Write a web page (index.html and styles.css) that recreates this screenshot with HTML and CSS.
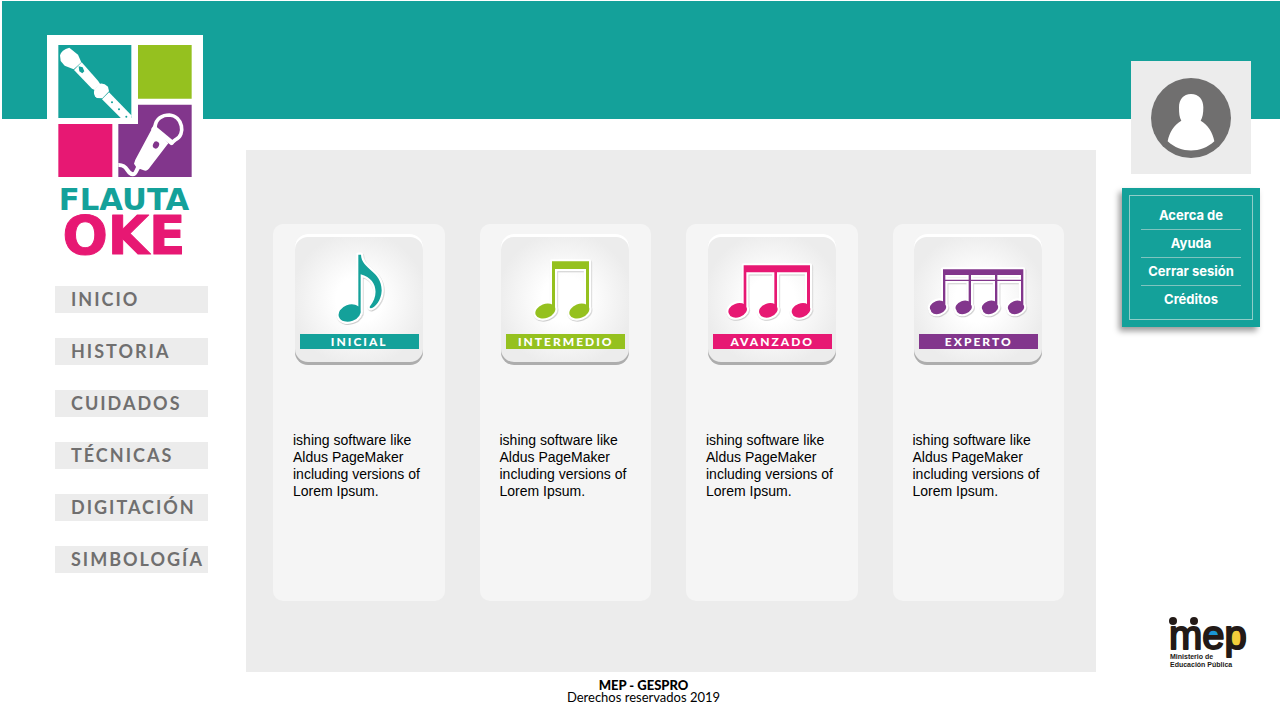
FILE: index.html
```html
<!DOCTYPE html>
<html lang="es">
<head>
<meta charset="utf-8">
<meta name="viewport" content="width=device-width, initial-scale=1">
<title>Flauta Oke</title>
<link rel="stylesheet" href="styles.css">
</head>
<body>
<div class="page">
  <header class="sidebar">
    <a class="brand" href="#" aria-label="Flauta Oke">
      <svg class="brand-art" viewBox="21 15 468 681">
        <path fill="#14a19a" d="M55 45h219v219H55z"/>
        <path fill="#95c11f" d="M294 45h161v161H294z"/>
        <path fill="#e71873" d="M55 282h162v159H55z"/>
        <path fill="#82368c" d="M294 224h161v217H235V282h59z"/>
        <g fill="#fff">
          <path d="M60 76Q64 60 88 53L114 74 124 97 101 118 74 107 62 93z"/>
          <path d="M125 97 174 152 180 161 164 180 156 176 102 120z"/>
          <path d="M177 162Q190 157 204 170L207 184 187 205 170 204Q158 194 163 180z"/>
          <path d="M207 187 274 256V265H243L186 208z"/>
          <path d="M339 290 385 340 331 410Q321 426 311 421L290 413 282 401 286 389z"/>
          <path d="M342 284 401 333Q405 338 399 344L393 346 333 298z"/>
        </g>
        <path fill="#14a19a" d="M116 109 128 112 133 124 127 130 118 124z"/>
        <g fill="#14a19a"><circle cx="216" cy="217" r="3"/><circle cx="237" cy="238" r="3"/><circle cx="259" cy="260" r="3"/></g>
        <g fill="none" stroke="#fff" stroke-linecap="round">
          <path stroke-width="11" d="M345 293C346 265 369 255 388 255C428 258 438 314 407 329L398 336"/>
          <path stroke-width="12" stroke-linecap="butt" d="M235 405C265 404 260 432 278 433C292 432 288 411 301 408"/>
        </g>
        <ellipse cx="348" cy="345" rx="9" ry="11" fill="#82368c" transform="rotate(25 348 345)"/>
        <text class="brand-flauta" x="252" y="540">FLAUTA</text>
        <text class="brand-oke" x="252" y="673">OKE</text>
      </svg>
    </a>
    <nav class="nav" aria-label="Principal">
      <a href="#">INICIO</a>
      <a href="#">HISTORIA</a>
      <a href="#">CUIDADOS</a>
      <a href="#">TÉCNICAS</a>
      <a href="#">DIGITACIÓN</a>
      <a href="#">SIMBOLOGÍA</a>
    </nav>
  </header>

  <main class="levels">
    <article class="card teal">
      <button class="tile" type="button">
        <svg class="note" viewBox="77 42 384 300"><path d="M267 104H275C276 148 338 152 337 212C336 240 318 262 305 265Q299 264 302 259C330 225 324 176 274 163V280H267ZM209 291A34 25 -20 1 1 273 267A34 25 -20 1 1 209 291Z"/></svg>
        <span class="ribbon">INICIAL</span>
      </button>
      <p>ishing software like Aldus PageMaker including versions of Lorem Ipsum.</p>
    </article>
    <article class="card green">
      <button class="tile" type="button">
        <svg class="note" viewBox="81 42 384 300"><path d="M234 124H345V272H336V147H243V272H234ZM185 284A31 21 -20 1 1 243 262A31 21 -20 1 1 185 284ZM287 284A31 21 -20 1 1 345 262A31 21 -20 1 1 287 284Z"/></svg>
        <span class="ribbon">INTERMEDIO</span>
      </button>
      <p>ishing software like Aldus PageMaker including versions of Lorem Ipsum.</p>
    </article>
    <article class="card pink">
      <button class="tile" type="button">
        <svg class="note" viewBox="86 42 384 300"><path d="M193 136H392V268H383V157H293V268H285V157H201V268H193ZM149 281A28 19 -20 1 1 201 261A28 19 -20 1 1 149 281ZM241 281A28 19 -20 1 1 293 261A28 19 -20 1 1 241 281ZM339 281A28 19 -20 1 1 391 261A28 19 -20 1 1 339 281Z"/></svg>
        <span class="ribbon">AVANZADO</span>
      </button>
      <p>ishing software like Aldus PageMaker including versions of Lorem Ipsum.</p>
    </article>
    <article class="card purple">
      <button class="tile" type="button">
        <svg class="note" viewBox="76 42 384 300"><path d="M163 148H404V260H397V165H326V260H319V165H247V260H240V165H170V260H163ZM166 179H400V183H166ZM126 270A24 16 -20 1 1 170 254A24 16 -20 1 1 126 270ZM203 270A24 16 -20 1 1 247 254A24 16 -20 1 1 203 270ZM282 270A24 16 -20 1 1 326 254A24 16 -20 1 1 282 270ZM360 270A24 16 -20 1 1 404 254A24 16 -20 1 1 360 270Z"/></svg>
        <span class="ribbon">EXPERTO</span>
      </button>
      <p>ishing software like Aldus PageMaker including versions of Lorem Ipsum.</p>
    </article>
  </main>

  <aside class="account">
    <div class="avatar">
      <svg viewBox="121 82 240 240" role="img" aria-label="Usuario">
        <circle cx="241" cy="202" r="120" fill="#706f6f"/>
        <path fill="#fff" d="M241 130C265 130 278 147 278 170C278 188 276 200 270 210C292 222 306 245 311 272C271 309 211 309 171 272C176 245 190 222 212 210C206 200 205 188 205 170C205 147 218 130 241 130Z"/>
      </svg>
    </div>
    <nav class="menu" aria-label="Cuenta">
      <ul>
        <li><a href="#">Acerca de</a></li>
        <li><a href="#">Ayuda</a></li>
        <li><a href="#">Cerrar sesión</a></li>
        <li><a href="#">Créditos</a></li>
      </ul>
    </nav>
    <svg class="mep" viewBox="0 0 84 54">
      <circle cx="5" cy="5" r="4" fill="#231a17"/>
      <circle cx="26" cy="5" r="4" fill="#231a17"/>
      <path fill="#1a96d4" d="M38 22a7 8 0 0 1 14 0z"/>
      <ellipse cx="70" cy="22" rx="8" ry="10" fill="#f3ce3b"/>
      <text class="mep-word" x="1" y="33">mep</text>
      <text class="mep-small" x="2" y="43">Ministerio de</text>
      <text class="mep-small" x="2" y="51">Educación Pública</text>
    </svg>
  </aside>

  <footer class="footer">
    <strong>MEP - GESPRO</strong>
    <span>Derechos reservados 2019</span>
  </footer>
</div>
</body>
</html>
```
FILE: styles.css
```css
* { box-sizing: border-box; }

body {
  margin: 0;
  background: #fff;
  font-family: Lato, sans-serif;
}

a { color: inherit; text-decoration: none; }

.page {
  display: grid;
  grid-template-columns: 246px 1fr 185px;
  grid-template-rows: 1fr auto;
  min-height: 100vh;
  background: linear-gradient(#14a19a, #14a19a) 2px 1px / calc(100% - 3px) 118px no-repeat;
}

/* Left column */
.sidebar { padding: 35px 38px 0 47px; }

.brand {
  display: block;
  width: 156px;
  background: #fff;
}

.brand-art { display: block; width: 100%; overflow: visible; }

.brand-flauta,
.brand-oke {
  font-family: "DejaVu Sans", sans-serif;
  font-weight: 700;
  text-anchor: middle;
  stroke-linejoin: round;
}

.brand-flauta { font-size: 92px; fill: #14a19a; }
.brand-oke { font-size: 160px; fill: #e71873; stroke: #e71873; stroke-width: 3px; }

.nav {
  display: grid;
  gap: 25px;
  margin: 24px 0 0 8px;
}

.nav a {
  padding-left: 16px;
  background: #ececec;
  color: #706f6f;
  font-size: 18px;
  font-weight: 700;
  line-height: 27px;
  letter-spacing: 2px;
  white-space: nowrap;
}

/* Level cards */
.levels {
  display: grid;
  grid-template-columns: repeat(4, 1fr);
  gap: 35px;
  margin-top: 150px;
  padding: 74px 32px 71px 27px;
  background: #ececec;
}

.card {
  display: flex;
  flex-direction: column;
  align-items: center;
  padding: 10px 20px;
  border-radius: 10px;
  background: #f5f5f5;
}

.teal { --accent: #14a19a; }
.green { --accent: #95c11f; }
.pink { --accent: #e71873; }
.purple { --accent: #82368c; }

.tile {
  width: 128px;
  height: 131px;
  padding: 0;
  border: 0;
  border-radius: 13px;
  background: radial-gradient(circle at 50% 50%, #fff 25%, #ececec 68px);
  box-shadow: inset 0 3px 0 #fff, inset 0 -3px 0 #adadad;
  font-family: inherit;
}

.note { display: block; width: 100%; height: 100px; }

.note path {
  fill: var(--accent);
  stroke: #fff;
  stroke-width: 13px;
  stroke-linejoin: round;
  paint-order: stroke;
  filter: drop-shadow(2px 3px 2px #ccc);
}

.ribbon {
  display: block;
  margin: 0 4px 16px 5px;
  background: var(--accent);
  color: #fff;
  font-size: 12px;
  font-weight: 900;
  line-height: 15px;
  letter-spacing: 2px;
}

.card p {
  width: 100%;
  margin: 67px 0 0;
  color: #000;
  font: 14px/17px "Liberation Sans", Arial, sans-serif;
}

/* Right column */
.account {
  display: flex;
  flex-direction: column;
  align-items: center;
  padding: 61px 21px 0 26px;
}

.avatar {
  display: grid;
  place-items: center;
  width: 120px;
  height: 113px;
  background: #ececec;
}

.avatar svg { width: 80px; }

.menu {
  align-self: stretch;
  margin-top: 14px;
  padding: 7px;
  background: #14a19a;
  box-shadow: -3px 4px 6px rgba(0, 0, 0, 0.4);
}

.menu ul {
  margin: 0;
  padding: 6px 11px;
  border: 1px solid #8fcdc8;
  list-style: none;
}

.menu li + li { border-top: 1px solid #7fc4bf; }

.menu a {
  display: block;
  color: #fff;
  font-family: Inter, sans-serif;
  font-size: 13px;
  font-weight: 700;
  line-height: 27px;
  text-align: center;
  white-space: nowrap;
}

.mep {
  align-self: flex-end;
  width: 84px;
  margin: auto 8px 2px 0;
  overflow: visible;
}

.mep-word,
.mep-small {
  font-family: "Liberation Sans", Arial, sans-serif;
  fill: #231a17;
  stroke: #231a17;
  stroke-linejoin: round;
}

.mep-word { font-size: 40px; stroke-width: 2px; }
.mep-small { font-size: 7px; font-weight: 700; stroke: none; }

.footer {
  grid-column: 1 / -1;
  display: flex;
  flex-direction: column;
  align-items: center;
  padding: 7px 0 18px 6px;
  color: #000;
  font-size: 13px;
  line-height: 12px;
}

.footer strong { font-weight: 900; }
```
